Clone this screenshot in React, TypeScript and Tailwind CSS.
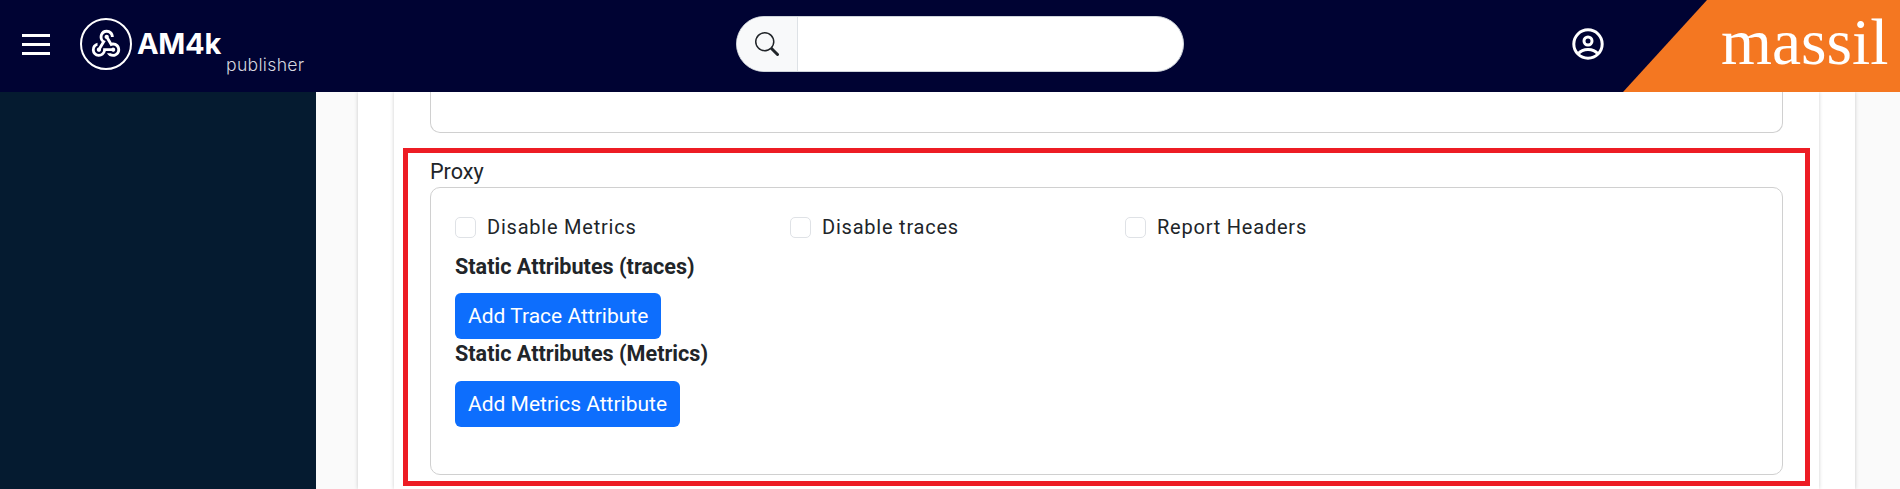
import React from "react";
import { MdWebhook } from "react-icons/md";

function Check({ label }: { label: string }) {
  return (
    <div className="flex w-[335px] h-[29px] items-center">
      <span className="w-[21px] h-[21px] rounded-[5px] border border-[#dfe2e6] bg-white shrink-0" />
      <span className="ml-[11px] pb-[1px] text-[20px] tracking-[0.78px] text-[#212529]">{label}</span>
    </div>
  );
}

function Blue({ label }: { label: string }) {
  return (
    <button className="h-[46px] px-[13px] rounded-[6px] bg-[#0d6efd] text-white text-[21px] leading-[29px] block">
      {label}
    </button>
  );
}

export default function App() {
  return (
    <div className="w-[1900px] h-[489px] overflow-hidden bg-white font-['Roboto',sans-serif]">
      <header className="relative flex items-center h-[92px] pb-[4px] bg-[#000333] overflow-hidden">
        <div className="ml-[22px] w-[28px] flex flex-col gap-[6px]">
          <span className="h-[3px] bg-white block" />
          <span className="h-[3px] bg-white block" />
          <span className="h-[3px] bg-white block" />
        </div>
        <div className="ml-[30px] w-[52px] h-[52px] rounded-full border-[2.5px] border-white flex items-center justify-center shrink-0">
          <MdWebhook size={34} color="white" />
        </div>
        <div className="relative w-[172px] h-[88px] shrink-0">
          <span className="absolute left-[5px] top-[26px] text-[29px] leading-[36px] font-bold text-white font-['Inter',sans-serif] tracking-[-0.3px]">AM4k</span>
          <span className="absolute left-[94px] top-[53px] text-[17.6px] leading-[24px] text-[#d5d6df] font-['Inter',sans-serif] font-light tracking-[0.3px]">publisher</span>
        </div>
        <div className="ml-[432px] w-[448px] h-[56px] flex rounded-[28px] overflow-hidden border border-[#ced4da] bg-white shrink-0">
          <div className="w-[61px] bg-[#f8f9fa] border-r border-[#dee2e6] flex items-center justify-center">
            <svg width="24" height="24" viewBox="0 0 16 16" fill="#212529">
              <path d="M11.742 10.344a6.5 6.5 0 1 0-1.397 1.398h-.001c.03.04.062.078.098.115l3.85 3.85a1 1 0 0 0 1.415-1.414l-3.85-3.85a1.007 1.007 0 0 0-.115-.1zM12 6.5a5.5 5.5 0 1 1-11 0 5.5 5.5 0 0 1 11 0z" />
            </svg>
          </div>
        </div>
        <svg className="ml-[388px] shrink-0" width="32" height="32" viewBox="0 0 32 32" fill="none" stroke="white" strokeWidth="3">
          <circle cx="16" cy="16" r="14.2" />
          <circle cx="16" cy="13" r="4" />
          <path d="M6 26c2.500-3 6-4.400 10-4.400s7.500 1.400 10 4.400" />
        </svg>
        <div className="absolute right-0 top-0 h-[92px] w-[277px] bg-[#f47721] [clip-path:polygon(84px_0,100%_0,100%_100%,0_100%)]">
          <span className="absolute left-[98px] top-[8px] text-[65.5px] leading-[68px] text-white font-['Liberation_Serif',serif]">massil</span>
        </div>
      </header>
      <div className="flex h-[397px]">
        <aside className="w-[316px] bg-[#051b30] shrink-0" />
        <main className="flex-1 bg-[#fafafa] pl-[42px] pr-[45px]">
          <div className="h-full bg-white pl-[36px] pr-[36px] shadow-[0_0_4px_rgba(0,0,0,0.2)]">
            <div className="h-full bg-white pl-[9px] pr-[9px] shadow-[0_0_4px_rgba(0,0,0,0.2)]">
              <div className="mx-[27px] h-[41px] border-x border-b border-[#d0d0d0] rounded-b-[10px]" />
              <section className="mt-[15px] h-[338px] border-[5px] border-[#ed1c24] px-[22px] pt-[2px]">
                <div className="h-[32px] text-[21.6px] leading-[34px] text-[#212529]">Proxy</div>
                <div className="h-[288px] border border-[#d0d0d0] rounded-[10px] pl-[24px] pt-[25px]">
                  <div className="flex">
                    <Check label="Disable Metrics" />
                    <Check label="Disable traces" />
                    <Check label="Report Headers" />
                  </div>
                  <div className="mt-[10px] text-[21.6px] leading-[29px] font-bold text-[#212529]">Static Attributes (traces)</div>
                  <div className="mt-[12px]"><Blue label="Add Trace Attribute" /></div>
                  <div className="text-[21.6px] leading-[29px] font-bold text-[#212529]">Static Attributes (Metrics)</div>
                  <div className="mt-[13px]"><Blue label="Add Metrics Attribute" /></div>
                </div>
              </section>
            </div>
          </div>
        </main>
      </div>
    </div>
  );
}
